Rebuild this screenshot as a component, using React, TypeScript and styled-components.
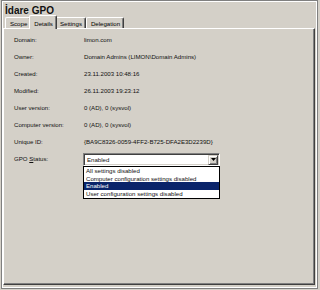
import React from 'react';
import styled, { createGlobalStyle } from 'styled-components';

const Global = createGlobalStyle`
  html, body { margin: 0; padding: 0; background: #d4d0c8; }
  body {
    width: 320px; height: 290px; overflow: hidden;
    font-family: "Liberation Sans", Arial, sans-serif;
    color: #000;
  }
`;

const Window = styled.div`
  box-sizing: border-box;
  width: 317px;
  height: 289px;
  margin-left: 1px;
  border: 1px solid #808080;
  box-shadow: inset 1px 1px 0 #ffffff, inset -1px -1px 0 #ffffff;
  padding: 0 2px 3px 1px;
  display: flex;
  flex-direction: column;
`;

const Title = styled.div`
  margin-top: 5px;
  height: 9px;
  line-height: 9px;
  padding-left: 2px;
  font-size: 10px;
  font-weight: bold;
  color: #111;
  white-space: nowrap;
`;

const TabStrip = styled.div`
  height: 13px;
  display: flex;
  align-items: flex-end;
  padding-left: 2px;
  position: relative;
  z-index: 2;
`;

const Tab = styled.div<{ $active?: boolean }>`
  box-sizing: border-box;
  font-size: 6.1px;
  line-height: 11px;
  white-space: nowrap;
  background: #d4d0c8;
  border-top: 1px solid #ffffff;
  border-left: 1px solid #ffffff;
  border-right: 1px solid #404040;
  box-shadow: inset -1px 0 0 #808080;
  border-radius: 2px 2px 0 0;
  padding: 0 3px 0 4px;
  height: ${p => (p.$active ? '14px' : '11px')};
  margin: ${p => (p.$active ? '0 -2px -1px -2px' : '0')};
  padding-top: ${p => (p.$active ? '2px' : '0')};
  position: relative;
  z-index: ${p => (p.$active ? 3 : 1)};
`;

const Panel = styled.div`
  flex: 1;
  box-sizing: border-box;
  border-top: 1px solid #ffffff;
  border-left: 1px solid #ffffff;
  border-right: 1px solid #404040;
  border-bottom: 1px solid #404040;
  box-shadow: inset -1px -1px 0 #808080;
  padding: 1.5px 0 0 10px;
  position: relative;
`;

const Grid = styled.div`
  display: grid;
  grid-template-columns: 70px 1fr;
  grid-auto-rows: 17px;
  font-size: 6.1px;
  line-height: 17px;
  white-space: nowrap;
  color: #111;
`;

const Label = styled.div``;
const Value = styled.div``;

const ComboCell = styled.div`
  position: relative;
  margin-left: -1px;
  padding-top: 3.5px;
`;

const Combo = styled.div`
  box-sizing: border-box;
  width: 137px;
  height: 13px;
  border-top: 1px solid #808080;
  border-left: 1px solid #808080;
  border-right: 1px solid #ffffff;
  border-bottom: 1px solid #ffffff;
  box-shadow: inset 1px 1px 0 #404040, inset -1px -1px 0 #d4d0c8;
  background: #ffffff;
  display: flex;
  align-items: center;
  padding: 1px 1px 1px 2px;
  line-height: 9px;
`;

const ComboText = styled.span`
  flex: 1;
  padding-left: 1px;
`;

const ArrowButton = styled.div`
  box-sizing: border-box;
  width: 10px;
  height: 10px;
  background: #d4d0c8;
  border-top: 1px solid #d4d0c8;
  border-left: 1px solid #d4d0c8;
  border-right: 1px solid #404040;
  border-bottom: 1px solid #404040;
  box-shadow: inset 1px 1px 0 #ffffff, inset -1px -1px 0 #808080;
  display: flex;
  align-items: center;
  justify-content: center;
`;

const List = styled.div`
  position: absolute;
  left: 0;
  top: 16.5px;
  box-sizing: border-box;
  width: 137px;
  border: 1px solid #000;
  background: #ffffff;
  padding-bottom: 1px;
  z-index: 5;
`;

const Item = styled.div<{ $selected?: boolean }>`
  height: 7.5px;
  line-height: 7.5px;
  padding-left: 2px;
  background: ${p => (p.$selected ? '#0a246a' : 'transparent')};
  color: ${p => (p.$selected ? '#ffffff' : '#111')};
`;

const rows: [string, string][] = [
  ['Domain:', 'limon.com'],
  ['Owner:', 'Domain Admins (LIMON\\Domain Admins)'],
  ['Created:', '23.11.2003 10:48:16'],
  ['Modified:', '26.11.2003 19:23:12'],
  ['User version:', '0 (AD), 0 (sysvol)'],
  ['Computer version:', '0 (AD), 0 (sysvol)'],
  ['Unique ID:', '{BA9C8326-0059-4FF2-B725-DFA2E3D2239D}'],
];

const options = [
  'All settings disabled',
  'Computer configuration settings disabled',
  'Enabled',
  'User configuration settings disabled',
];

export default function App() {
  return (
    <>
      <Global />
      <Window>
        <Title>İdare GPO</Title>
        <TabStrip>
          <Tab>Scope</Tab>
          <Tab $active>Details</Tab>
          <Tab>Settings</Tab>
          <Tab>Delegation</Tab>
        </TabStrip>
        <Panel>
          <Grid>
            {rows.map(([l, v]) => (
              <React.Fragment key={l}>
                <Label>{l}</Label>
                <Value>{v}</Value>
              </React.Fragment>
            ))}
            <Label>
              GPO <u>S</u>tatus:
            </Label>
            <ComboCell>
              <Combo>
                <ComboText>Enabled</ComboText>
                <ArrowButton>
                  <svg width="5" height="3" viewBox="0 0 5 3">
                    <path d="M0 0H5L2.5 3Z" fill="#000" />
                  </svg>
                </ArrowButton>
              </Combo>
              <List>
                {options.map(o => (
                  <Item key={o} $selected={o === 'Enabled'}>
                    {o}
                  </Item>
                ))}
              </List>
            </ComboCell>
          </Grid>
        </Panel>
      </Window>
    </>
  );
}
